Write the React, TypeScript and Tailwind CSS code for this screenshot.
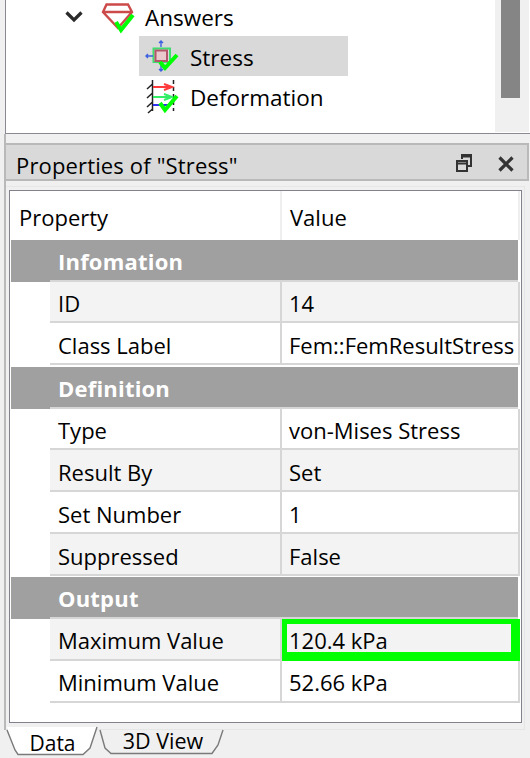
function Check({ d }: { d: string }) {
  return <path d={d} fill="none" stroke="#00ff00" strokeWidth="4" />;
}
function Row({ name, value, alt, highlight, h, lead = "leading-[42px]" }: { name: string; value: string; alt?: boolean; highlight?: boolean; h: string; lead?: string }) {
  const bg = alt ? "bg-[#f3f3f3]" : "bg-white";
  return (
    <div className={"flex shrink-0 " + h}>
      <div className="w-[39px] shrink-0" />
      <div className={"w-[232px] shrink-0 border-b-2 border-r-2 border-[#d6d6d6] pl-2 " + lead + " " + bg}>{name}</div>
      {highlight ? (
        <div className={"w-[238px] shrink-0 border-[#00ff00] border-t-[5px] border-l-[5px] border-r-[9px] border-b-[9px] pl-[2px] leading-[32px] " + bg}>{value}</div>
      ) : (
        <div className={"w-[238px] shrink-0 pl-[7px] border-b-2 border-r-2 border-[#d6d6d6] " + lead + " " + bg}>{value}</div>
      )}
    </div>
  );
}
function Group({ name, h }: { name: string; h: string }) {
  return (
    <div className={"w-[507px] shrink-0 flex flex-col justify-end " + h}>
      <div className="h-[42px] flex bg-[#a0a0a0]">
        <div className="ml-[39px] flex-1 border-b-2 border-[#d6d6d6] pl-2 text-[22px] font-bold text-white leading-[42px] tracking-[0.2px]">{name}</div>
      </div>
    </div>
  );
}
export default function App() {
  return (
    <div className="w-[530px] h-[758px] overflow-hidden bg-[#f0f0f0] text-[22px] text-black flex flex-col" style={{ fontFamily: '"Open Sans","Noto Sans",sans-serif' }}>
      <div className="h-[134px] shrink-0 ml-[5px] border-l border-b border-[#8a8a92] bg-white flex text-[22.5px]">
        <div className="flex-1 flex flex-col">
          <div className="h-[36px] flex items-center pl-[58px] shrink-0">
            <svg width="20" height="36" viewBox="0 0 20 36" className="mr-[16px]"><path d="M2.5 12.5L10 20L17.5 12.5" fill="none" stroke="#2a2a2a" strokeWidth="3.2" /></svg>
            <svg width="36" height="36" viewBox="0 0 36 36" className="mr-[9px]">
              <path d="M6.5 4.5H28L32 12L18 28L3 12ZM3 12H32" fill="none" stroke="#cc4a4a" strokeWidth="2.4" />
              <Check d="M16 22L21 30L33 15" />
            </svg>
            <span>Answers</span>
          </div>
          <div className="h-[40px] w-[209px] ml-[133px] bg-[#d9d9d9] flex items-center shrink-0">
            <svg width="34" height="36" viewBox="0 0 34 36" className="ml-[6px] mr-[11px]">
              <path d="M8.5 10.5H25V24H8.5Z" fill="none" stroke="#3fdc6f" strokeWidth="2" />
              <path d="M10.5 12.5H22V23H10.5Z" fill="#e8c8cc" stroke="#b4546a" strokeWidth="2" />
              <path d="M16 9V3M14 5l2-2l2 2M8 18H1M3 16l-2 2l2 2M16 26V33M14 31l2 2l2-2" fill="none" stroke="#3a5fe0" strokeWidth="1.4" />
              <Check d="M15 24L20 30L32 17" />
            </svg>
            <span className="mt-[3px]">Stress</span>
          </div>
          <div className="h-[40px] ml-[133px] flex items-center shrink-0">
            <svg width="34" height="36" viewBox="0 0 34 36" className="ml-[6px] mr-[11px]">
              <path d="M7.5 2V33M7.5 6L2 11M7.5 15L2 20M7.5 24L2 29M7.5 31L3 35" fill="none" stroke="#222" strokeWidth="1.5" />
              <path d="M28.5 2V33" stroke="#222" strokeWidth="1.5" strokeDasharray="4 3" />
              <path d="M8 9H27M19 6L27 9L19 12" fill="none" stroke="#ff3b3b" strokeWidth="2" />
              <path d="M8 19H27M19 16L27 19L19 22" fill="none" stroke="#33ee66" strokeWidth="2" />
              <path d="M8 27H26" stroke="#3030f0" strokeWidth="2" />
              <Check d="M15 25L20 32L32 18" />
            </svg>
            <span className="mt-[3px]">Deformation</span>
          </div>
        </div>
        <div className="w-[34px] mr-px bg-[#f0f0f0] flex justify-center shrink-0 h-[132px]">
          <div className="w-[19px] h-[98px] bg-[#858585] mr-[3px]" />
        </div>
      </div>
      <div className="ml-[4px] h-[596px] shrink-0 border-l-2 border-[#b9b9b9] flex flex-col">
        <div className="h-[38px] mt-[9px] mr-px shrink-0 border-2 border-l-0 border-[#b9b9b9] bg-[#d9d9d9] flex items-center pl-[10px]">
          <span className="flex-1 mt-[6px] tracking-[0.15px]">Properties of "Stress"</span>
          <svg width="16" height="18" viewBox="0 0 16 18" className="mr-[26px] mt-[1px]"><path d="M6 5V1H15V12H11M1 7H11V17H1ZM1 9.5H11M6 2.5H15" fill="none" stroke="#333" strokeWidth="2" /></svg>
          <svg width="16" height="16" viewBox="0 0 16 16" className="mr-[13px] mt-[4px]"><path d="M1.5 1.5L14.5 14.5M14.5 1.5L1.5 14.5" fill="none" stroke="#333" strokeWidth="3.2" /></svg>
        </div>
        <div className="mt-[5px] mr-[5px] h-[544px] shrink-0 border-t border-r border-b border-[#e6e6e6] pt-[3px] pl-[3px]">
          <div className="w-[513px] h-[533px] border border-[#82828c] bg-white flex flex-col pl-px">
            <div className="flex h-[49px] shrink-0 leading-[53px]">
              <div className="w-[271px] pl-[8px] border-r-2 border-[#efefef]">Property</div>
              <div className="w-[238px] pl-[8px] border-r-2 border-[#efefef]">Value</div>
            </div>
            <Group name="Infomation" h="h-[42px]" />
            <Row name="ID" value="14" alt h="h-[41px]" />
            <Row name="Class Label" value="Fem::FemResultStress" h="h-[42px]" lead="leading-[44px]" />
            <Group name="Definition" h="h-[44px]" />
            <Row name="Type" value="von-Mises Stress" h="h-[41px]" />
            <Row name="Result By" value="Set" alt h="h-[42px]" lead="leading-[44px]" />
            <Row name="Set Number" value="1" h="h-[42px]" lead="leading-[44px]" />
            <Row name="Suppressed" value="False" alt h="h-[42px]" lead="leading-[44px]" />
            <Group name="Output" h="h-[43px]" />
            <Row name="Maximum Value" value="120.4 kPa" alt highlight h="h-[42px]" />
            <Row name="Minimum Value" value="52.66 kPa" h="h-[42px]" />
          </div>
        </div>
      </div>
      <div className="flex pl-[5px] -mt-[7px] h-[35px] items-start shrink-0 relative">
        <div className="relative w-[93px] h-[33px] text-center">
          <svg width="93" height="33" viewBox="0 0 93 33" className="absolute left-0 top-0">
            <path d="M2 4L10 27L13 32H78L85 25L92 4Z" fill="white" />
            <path d="M2 7L10 27L13 31.5H78L85 25L92 4" fill="none" stroke="#7a7a7a" strokeWidth="1.4" />
          </svg>
          <span className="relative top-[2px] left-px leading-[36px] text-[21px]">Data</span>
        </div>
        <div className="relative w-[127px] h-[33px] text-center">
          <svg width="127" height="33" viewBox="0 0 127 33" className="absolute left-0 top-0">
            <path d="M2 7L7 25L13 30.5H114L120 22L125 7" fill="none" stroke="#7a7a7a" strokeWidth="1.4" />
          </svg>
          <span className="relative left-[1.5px] leading-[36px] text-[21.5px]">3D View</span>
        </div>
      </div>
    </div>
  );
}
